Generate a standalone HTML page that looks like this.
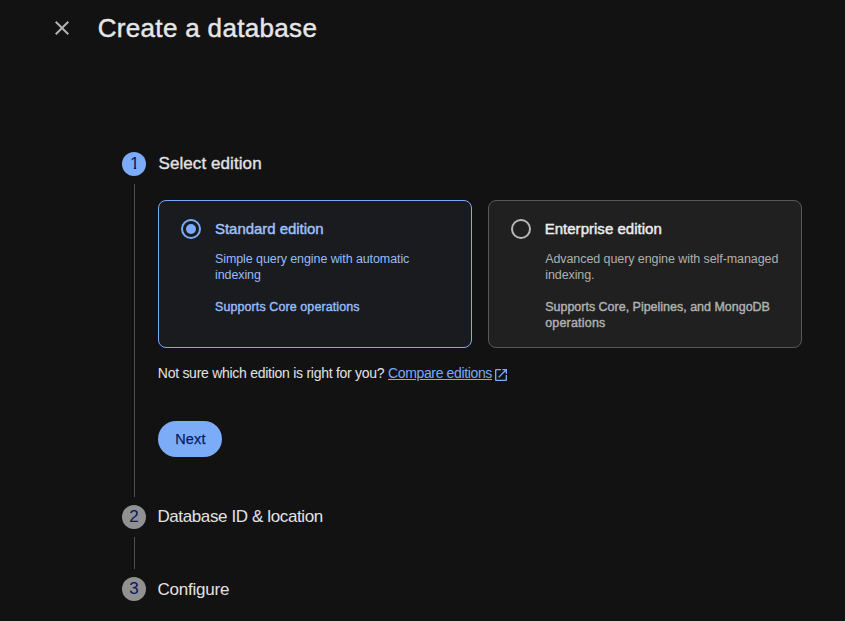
<!DOCTYPE html>
<html lang="en">
<head>
<meta charset="utf-8">
<title>Create a database</title>
<style>
html,body{margin:0;padding:0;}
body{width:845px;height:621px;overflow:hidden;background:#121212;color:#e3e3e3;font-family:"Liberation Sans",sans-serif;position:relative;}
.t{position:absolute;white-space:nowrap;margin:0;}
#close{position:absolute;left:50px;top:16px;width:24px;height:24px;}
.num{position:absolute;width:24px;height:24px;border-radius:50%;left:122px;font-size:17px;line-height:24px;text-align:center;color:#0b1658;}
.d{display:block;width:24px;height:24px;}
#d1{text-indent:1.5px;clip-path:polygon(0 0,24px 0,24px 14.6px,14.2px 14.6px,14.2px 24px,11.8px 24px,11.8px 14.6px,0 14.6px);}
.n1{top:152px;background:#7cacf8;}
.n2{top:505px;background:#919191;}
.n3{top:577px;background:#919191;}
.vline{position:absolute;left:134px;width:1px;background:#495057;}
.card{position:absolute;top:200px;width:314px;height:148px;border-radius:8px;box-sizing:border-box;}
#c1{left:158px;background:#1a1b1e;border:1px solid #7cacf8;}
#c2{left:488px;background:#202020;border:1px solid #55595d;}
.radio{position:absolute;top:219px;width:20px;height:20px;box-sizing:border-box;border-radius:50%;border:2px solid #7cacf8;}
#r1{left:181px;}
#r1::after{content:"";position:absolute;left:3px;top:3px;width:10px;height:10px;border-radius:50%;background:#7cacf8;}
#r2{left:511px;border-color:#b6b7b6;}
#nextbtn{position:absolute;left:158px;top:421px;width:64px;height:36px;border-radius:18px;background:#7cacf8;}
#ext{position:absolute;left:493px;top:367px;width:16px;height:16px;}
#title{left:97.70px;top:12.79px;font-size:26px;line-height:31px;letter-spacing:0.33px;color:#e6e6e6;-webkit-text-stroke:0.45px #e6e6e6;}
#step1{left:158.50px;top:154.01px;font-size:17px;line-height:20px;letter-spacing:0.08px;color:#e3e3e3;-webkit-text-stroke:0.35px #e3e3e3;}
#c1t{left:215.00px;top:219.70px;font-size:15px;line-height:18px;letter-spacing:-0.04px;color:#a0c2fa;-webkit-text-stroke:0.4px #a0c2fa;}
#c1d1{left:215.00px;top:252.27px;font-size:12.5px;line-height:15px;letter-spacing:-0.09px;color:#96bcf9;}
#c1d2{left:215.00px;top:268.27px;font-size:12.5px;line-height:15px;letter-spacing:-0.09px;color:#96bcf9;}
#c1s{left:215.00px;top:300.37px;font-size:12.5px;line-height:15px;letter-spacing:0.09px;color:#96bcf9;-webkit-text-stroke:0.4px #96bcf9;}
#c2t{left:544.70px;top:220.10px;font-size:15px;line-height:18px;letter-spacing:0.02px;color:#ededed;-webkit-text-stroke:0.45px #ededed;}
#c2d1{left:545.20px;top:251.87px;font-size:12.5px;line-height:15px;letter-spacing:-0.08px;color:#aeb0af;}
#c2d2{left:545.20px;top:267.87px;font-size:12.5px;line-height:15px;letter-spacing:-0.08px;color:#aeb0af;}
#c2s1{left:545.20px;top:300.47px;font-size:12.5px;line-height:15px;letter-spacing:-0.01px;color:#b0b2b1;-webkit-text-stroke:0.4px #b0b2b1;}
#c2s2{left:545.20px;top:316.47px;font-size:12.5px;line-height:15px;letter-spacing:0.19px;color:#b0b2b1;-webkit-text-stroke:0.4px #b0b2b1;}
#hint{left:157.80px;top:364.65px;font-size:14px;line-height:17px;letter-spacing:-0.27px;color:#e3e3e3;}
#link{left:388.00px;top:364.65px;font-size:14px;line-height:17px;letter-spacing:-0.36px;color:#7cacf8;text-decoration:underline;text-underline-offset:0.5px;text-decoration-thickness:1px;}
#next{left:175.20px;top:430.88px;font-size:14.5px;line-height:17px;letter-spacing:0.14px;color:#0b1a5c;-webkit-text-stroke:0.25px #0b1a5c;}
#step2{left:157.40px;top:507.31px;font-size:17px;line-height:20px;letter-spacing:-0.38px;color:#e3e3e3;}
#step3{left:157.40px;top:579.61px;font-size:17px;line-height:20px;letter-spacing:-0.21px;color:#e3e3e3;}
</style>
</head>
<body>
<svg id="close" viewBox="0 0 24 24"><path fill="#b0b2b1" d="M19 6.41L17.59 5 12 10.59 6.41 5 5 6.41 10.59 12 5 17.59 6.41 19 12 13.41 17.59 19 19 17.59 13.41 12z"/></svg>
<h1 class="t" id="title" style="font-weight:normal">Create a database</h1>

<div class="num n1"><span class="d" id="d1">1</span></div>
<div class="t" id="step1">Select edition</div>
<div class="vline" style="top:184px;height:313px"></div>

<div class="card" id="c1"></div>
<div class="radio" id="r1"></div>
<div class="t" id="c1t">Standard edition</div>
<div class="t" id="c1d1">Simple query engine with automatic</div>
<div class="t" id="c1d2">indexing</div>
<div class="t" id="c1s">Supports Core operations</div>

<div class="card" id="c2"></div>
<div class="radio" id="r2"></div>
<div class="t" id="c2t">Enterprise edition</div>
<div class="t" id="c2d1">Advanced query engine with self-managed</div>
<div class="t" id="c2d2">indexing.</div>
<div class="t" id="c2s1">Supports Core, Pipelines, and MongoDB</div>
<div class="t" id="c2s2">operations</div>

<div class="t" id="hint">Not sure which edition is right for you?</div>
<a class="t" id="link">Compare editions</a>
<svg id="ext" viewBox="0 0 24 24"><path fill="#7cacf8" d="M19 19H5V5h7V3H5c-1.11 0-2 .9-2 2v14c0 1.1.89 2 2 2h14c1.1 0 2-.9 2-2v-7h-2v7zM14 3v2h3.59l-9.83 9.83 1.41 1.41L19 6.41V10h2V3h-7z"/></svg>

<div id="nextbtn"></div>
<div class="t" id="next">Next</div>

<div class="num n2"><span class="d">2</span></div>
<div class="t" id="step2">Database ID &amp; location</div>
<div class="vline" style="top:537px;height:32px"></div>
<div class="num n3"><span class="d">3</span></div>
<div class="t" id="step3">Configure</div>
</body>
</html>
